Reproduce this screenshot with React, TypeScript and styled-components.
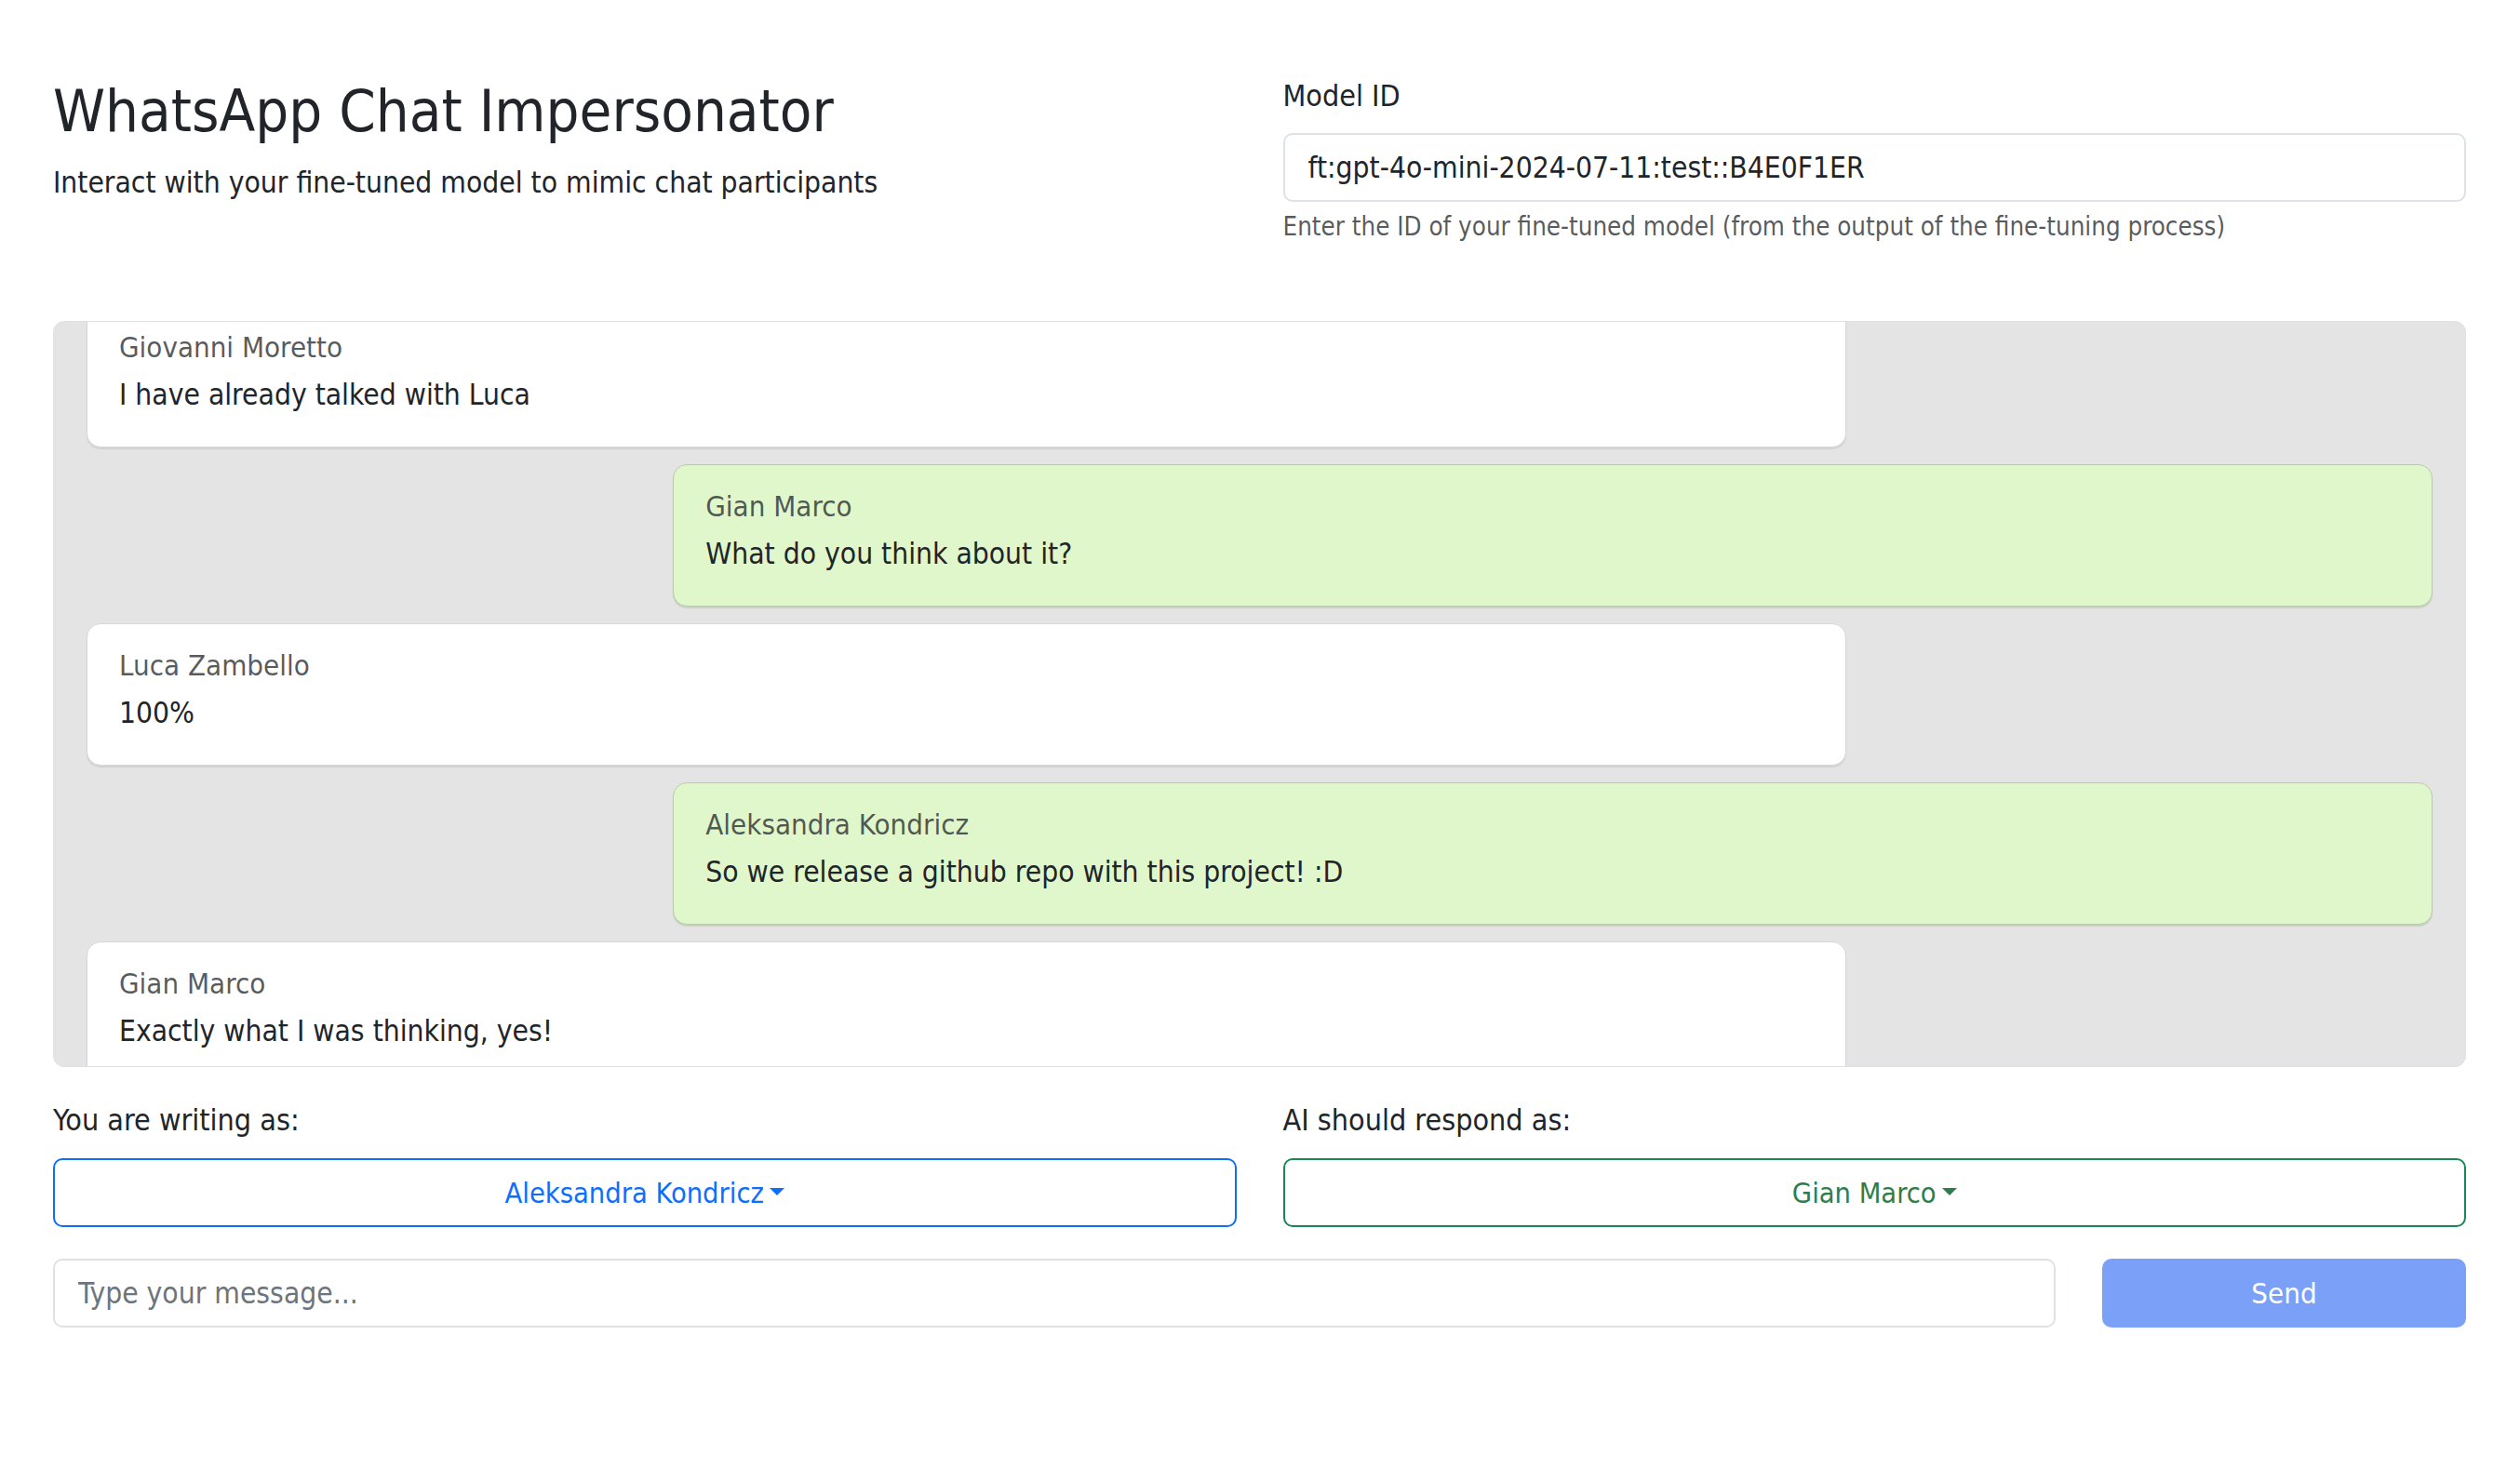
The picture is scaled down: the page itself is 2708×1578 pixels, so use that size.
import React, { useLayoutEffect, useRef } from 'react';
import styled, { createGlobalStyle } from 'styled-components';

const GlobalStyle = createGlobalStyle`
  * { box-sizing: border-box; }
  body {
    margin: 0;
    background: #ffffff;
    color: #212529;
    font-family: "DejaVu Sans Condensed", "DejaVu Sans", sans-serif;
    font-size: 31.5px;
    line-height: 42px;
  }
`;

const Page = styled.div`
  padding: 82px 58px 80px 57px;
`;

const Header = styled.div`
  display: grid;
  grid-template-columns: 1fr 1fr;
  column-gap: 50px;
  align-items: start;
`;

const Title = styled.h1`
  margin: 0 0 17px;
  font-size: 63px;
  font-weight: 400;
  line-height: 76px;
  color: #212529;
`;

const Lead = styled.p`
  margin: 0;
  font-size: 31.5px;
  line-height: 42px;
`;

const Label = styled.label`
  display: block;
  margin-bottom: 19px;
  font-size: 32px;
  line-height: 42px;
  color: #212529;
`;

const TextInput = styled.input`
  display: block;
  width: 100%;
  height: 74px;
  padding: 0 25px;
  border: 2px solid #dee2e6;
  border-radius: 10px;
  font-family: inherit;
  font-size: 31.5px;
  color: #212529;
  background: #fff;
  outline: none;

  &::placeholder {
    color: #6c757d;
  }
`;

const Help = styled.div`
  margin-top: 8px;
  font-size: 27.5px;
  line-height: 36px;
  color: rgba(33, 37, 41, 0.75);
`;

const ChatBox = styled.div`
  margin-top: 84px;
  height: 802px;
  padding: 35px;
  background: #e4e4e4;
  border: 1px solid #dee2e6;
  border-radius: 12px;
  overflow: hidden;
`;

const MessageList = styled.div`
  display: flex;
  flex-direction: column;
  gap: 18px;
`;

const Bubble = styled.div<{ $mine: boolean }>`
  align-self: ${p => (p.$mine ? 'flex-end' : 'flex-start')};
  width: 75%;
  padding: 23px 34px 35px;
  border-radius: 15px;
  background: ${p => (p.$mine ? '#e0f6cb' : '#ffffff')};
  border: 1px solid ${p => (p.$mine ? '#b9cca9' : '#d8d8d8')};
  box-shadow: 0 2px 1px ${p => (p.$mine ? 'rgba(120,150,100,0.25)' : 'rgba(0,0,0,0.08)')};
`;

const Sender = styled.div`
  margin-bottom: 9px;
  font-size: 31px;
  line-height: 42px;
  color: rgba(33, 37, 41, 0.75);
`;

const Body = styled.div`
  font-size: 31.5px;
  line-height: 42px;
  color: #212529;
`;

const Pickers = styled.div`
  display: grid;
  grid-template-columns: 1fr 1fr;
  column-gap: 50px;
  margin-top: 36px;
`;

const PickerLabel = styled(Label)`
  margin-bottom: 20px;
`;

const Dropdown = styled.button<{ $tone: 'blue' | 'green' }>`
  display: block;
  width: 100%;
  height: 74px;
  border-radius: 10px;
  background: #fff;
  border: 2px solid ${p => (p.$tone === 'blue' ? '#0d6efd' : '#198754')};
  color: ${p => (p.$tone === 'blue' ? '#0d6efd' : '#2e7d4a')};
  font-family: inherit;
  font-size: 30.5px;
  text-align: center;
  cursor: pointer;

  &::after {
    content: '';
    display: inline-block;
    margin-left: 6px;
    vertical-align: 8px;
    border-top: 8px solid currentColor;
    border-left: 8px solid transparent;
    border-right: 8px solid transparent;
  }
`;

const Composer = styled.div`
  display: flex;
  gap: 50px;
  margin-top: 34px;
`;

const MessageInput = styled(TextInput)`
  flex: 1;
`;

const SendButton = styled.button`
  flex: 0 0 391px;
  height: 74px;
  border: none;
  border-radius: 10px;
  background: #7aa0f8;
  color: #fff;
  font-family: inherit;
  font-size: 31px;
`;

const messages = [
  { name: 'Giovanni Moretto', text: 'I have already talked with Luca', mine: false },
  { name: 'Gian Marco', text: 'What do you think about it?', mine: true },
  { name: 'Luca Zambello', text: '100%', mine: false },
  { name: 'Aleksandra Kondricz', text: 'So we release a github repo with this project! :D', mine: true },
  { name: 'Gian Marco', text: 'Exactly what I was thinking, yes!', mine: false },
];

const App: React.FC = () => {
  const chatRef = useRef<HTMLDivElement>(null);

  useLayoutEffect(() => {
    if (chatRef.current) chatRef.current.scrollTop = 53;
  }, []);

  return (
    <>
      <GlobalStyle />
      <Page>
        <Header>
          <div>
            <Title>WhatsApp Chat Impersonator</Title>
            <Lead>Interact with your fine-tuned model to mimic chat participants</Lead>
          </div>
          <div>
            <Label htmlFor="model-id">Model ID</Label>
            <TextInput id="model-id" defaultValue="ft:gpt-4o-mini-2024-07-11:test::B4E0F1ER" />
            <Help>Enter the ID of your fine-tuned model (from the output of the fine-tuning process)</Help>
          </div>
        </Header>

        <ChatBox ref={chatRef}>
          <MessageList>
            {messages.map((m, i) => (
              <Bubble key={i} $mine={m.mine}>
                <Sender>{m.name}</Sender>
                <Body>{m.text}</Body>
              </Bubble>
            ))}
          </MessageList>
        </ChatBox>

        <Pickers>
          <div>
            <PickerLabel>You are writing as:</PickerLabel>
            <Dropdown $tone="blue">Aleksandra Kondricz</Dropdown>
          </div>
          <div>
            <PickerLabel>AI should respond as:</PickerLabel>
            <Dropdown $tone="green">Gian Marco</Dropdown>
          </div>
        </Pickers>

        <Composer>
          <MessageInput placeholder="Type your message..." />
          <SendButton disabled>Send</SendButton>
        </Composer>
      </Page>
    </>
  );
};

export default App;
